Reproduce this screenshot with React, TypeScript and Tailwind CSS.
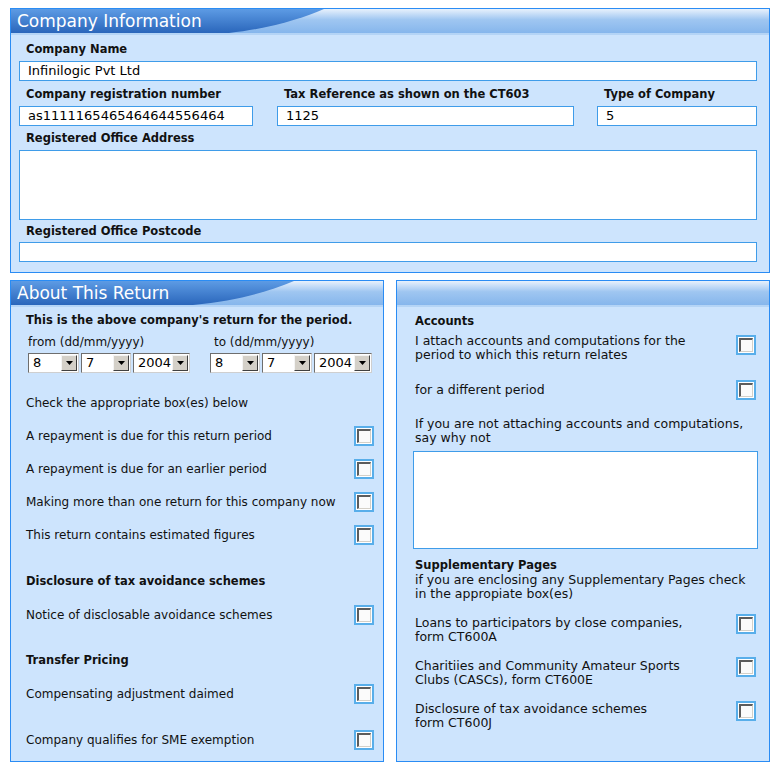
import React, { ReactNode } from 'react';

const font = "font-['DejaVu_Sans','Verdana',sans-serif]";

const PanelHeader: React.FC<{ title?: string; swoosh?: string; gid: string }> = ({ title, swoosh, gid }) => (
  <div className="relative h-[26px] border-b-2 border-[#b4d4f6] bg-gradient-to-b from-[#e8f1fc] via-[#9fc6f1] via-45% to-[#86b6ec] overflow-hidden">
    {swoosh && (
      <svg className="absolute left-0 top-0" width="340" height="24" viewBox="0 0 340 24">
        <defs>
          <linearGradient id={gid} x1="0" y1="0" x2="0" y2="1">
            <stop offset="0" stopColor="#5d9be4" />
            <stop offset="1" stopColor="#2a66bb" />
          </linearGradient>
        </defs>
        <path d={swoosh} fill={`url(#${gid})`} />
      </svg>
    )}
    {title && <div className="relative pl-[6px] text-[17px] leading-[24px] text-white">{title}</div>}
  </div>
);

const Panel: React.FC<{ className: string; children: ReactNode; header: ReactNode }> = ({ className, children, header }) => (
  <div className={`border border-[#2a8cf4] bg-[#cde4fd] ${className}`}>
    {header}
    {children}
  </div>
);

const Label: React.FC<{ children: ReactNode; className?: string }> = ({ children, className = '' }) => (
  <div className={`h-[14px] pl-[7px] text-[11.5px] font-bold leading-[14px] text-[#111] ${className}`}>{children}</div>
);

const TextBox: React.FC<{ value?: string; className?: string }> = ({ value = '', className = '' }) => (
  <div className={`h-[20px] border border-[#3f9ce9] bg-white px-[8px] text-[13px] leading-[18px] text-black ${className}`}>{value}</div>
);

const CheckBox: React.FC<{ className?: string }> = ({ className = '' }) => (
  <div className={`h-[20px] w-[20px] shrink-0 border-2 border-[#58aeea] bg-white p-[1px] ${className}`}>
    <div className="h-full w-full border border-[#d4d0c8] border-t-2 border-l-2 border-t-[#5c5c5c] border-l-[#5c5c5c] bg-[#fbfbfb]" />
  </div>
);

const Select: React.FC<{ value: string; w: string }> = ({ value, w }) => (
  <div className={`flex h-[20px] items-center border border-t-[#6e6e6e] border-l-[#6e6e6e] border-b-[#cfcfcf] border-r-[#cfcfcf] bg-white ${w}`}>
    <span className="flex-1 pl-[4px] text-[13px] leading-[18px] text-black">{value}</span>
    <div className="mr-[1px] flex h-[16px] w-[16px] items-center justify-center border border-t-[#f4f4f4] border-l-[#f4f4f4] border-b-[#404040] border-r-[#404040] bg-[#d4d0c8]">
      <svg width="7" height="4" viewBox="0 0 7 4">
        <path d="M0 0H7L3.5 4Z" fill="#000" />
      </svg>
    </div>
  </div>
);

const CheckRow: React.FC<{ children: ReactNode; className?: string }> = ({ children, className = '' }) => (
  <div className={`flex h-[33px] items-center justify-between ${className}`}>
    <span>{children}</span>
    <CheckBox />
  </div>
);

const RightRow: React.FC<{ children: ReactNode; className?: string; boxTop?: string }> = ({ children, className = '', boxTop = 'mt-[1px]' }) => (
  <div className={`flex items-start justify-between ${className}`}>
    <div className="leading-[14px]">{children}</div>
    <CheckBox className={boxTop} />
  </div>
);

export default function App() {
  return (
    <div className={`h-[762px] w-[779px] overflow-hidden bg-white pl-[10px] pt-[8px] ${font} text-[12px] text-[#111]`}>
      <Panel className="w-[760px] pb-[10px]" header={<PanelHeader gid="g1" title="Company Information" swoosh="M0 0H313C292 9 262 19 218 24H0Z" />}>
        <div className="pl-[8px] pr-[12px]">
          <Label className="mt-[7px]">Company Name</Label>
          <TextBox className="mt-[5px]" value="Infinilogic Pvt Ltd" />
          <div className="mt-[6px] flex">
            <div className="w-[234px]">
              <Label>Company registration number</Label>
              <TextBox className="mt-[5px]" value="as1111165465464644556464" />
            </div>
            <div className="ml-[24px] w-[297px]">
              <Label>Tax Reference as shown on the CT603</Label>
              <TextBox className="mt-[5px]" value="1125" />
            </div>
            <div className="ml-[23px] w-[160px]">
              <Label>Type of Company</Label>
              <TextBox className="mt-[5px]" value="5" />
            </div>
          </div>
          <Label className="mt-[5px]">Registered Office Address</Label>
          <TextBox className="mt-[5px] !h-[70px]" />
          <Label className="mt-[4px]">Registered Office Postcode</Label>
          <TextBox className="mt-[4px]" />
        </div>
      </Panel>

      <div className="mt-[7px] flex gap-[12px]">
        <Panel className="h-[482px] w-[374px]" header={<PanelHeader gid="g2" title="About This Return" swoosh="M0 0H283C256 11 226 20 182 24H0Z" />}>
          <div className="pl-[15px] pr-[9px]">
            <div className="flex h-[28px] items-center text-[11.5px] font-bold">This is the above company's return for the period.</div>
            <div className="flex pl-[2px]">
              <div>
                <div className="h-[14px] leading-[14px]">from (dd/mm/yyyy)</div>
                <div className="mt-[4px] flex gap-[2px]">
                  <Select value="8" w="w-[51px]" />
                  <Select value="7" w="w-[50px]" />
                  <Select value="2004" w="w-[57px]" />
                </div>
              </div>
              <div className="ml-[20px]">
                <div className="h-[14px] pl-[4px] leading-[14px]">to (dd/mm/yyyy)</div>
                <div className="mt-[4px] flex gap-[2px]">
                  <Select value="8" w="w-[50px]" />
                  <Select value="7" w="w-[50px]" />
                  <Select value="2004" w="w-[58px]" />
                </div>
              </div>
            </div>
            <div className="mt-[13px] flex h-[33px] items-center">Check the appropriate box(es) below</div>
            <CheckRow>A repayment is due for this return period</CheckRow>
            <CheckRow>A repayment is due for an earlier period</CheckRow>
            <CheckRow>Making more than one return for this company now</CheckRow>
            <CheckRow>This return contains estimated figures</CheckRow>
            <div className="mt-[14px] flex h-[33px] items-center text-[11.5px] font-bold">Disclosure of tax avoidance schemes</div>
            <CheckRow>Notice of disclosable avoidance schemes</CheckRow>
            <div className="mt-[13px] flex h-[33px] items-center text-[11.5px] font-bold">Transfer Pricing</div>
            <CheckRow>Compensating adjustment daimed</CheckRow>
            <CheckRow className="mt-[13px]">Company qualifies for SME exemption</CheckRow>
          </div>
        </Panel>

        <Panel className="h-[482px] w-[374px]" header={<PanelHeader gid="g3" />}>
          <div className="pl-[18px] pr-[13px] text-[12.5px]">
            <div className="mt-[7px] h-[14px] text-[11.5px] font-bold leading-[14px]">Accounts</div>
            <RightRow className="mt-[6px]">
              I attach accounts and computations for the
              <br />
              period to which this return relates
            </RightRow>
            <div className="mt-[18px] flex h-[20px] items-center justify-between">
              <span>for a different period</span>
              <CheckBox />
            </div>
            <div className="mt-[17px] leading-[14px]">
              If you are not attaching accounts and computations,
              <br />
              say why not
            </div>
            <div className="ml-[-2px] mr-[-2px] mt-[6px] h-[98px] border border-[#3f9ce9] bg-white" />
            <div className="mt-[9px] leading-[14.5px]">
              <div className="text-[11.5px] font-bold">Supplementary Pages</div>
              <div>if you are enclosing any Supplementary Pages check</div>
              <div>in the appropiate box(es)</div>
            </div>
            <RightRow className="mt-[14px]" boxTop="mt-[-2px]">
              Loans to participators by close companies,
              <br />
              form CT600A
            </RightRow>
            <RightRow className="mt-[15px]" boxTop="mt-[-2px]">
              Charitiies and Community Amateur Sports
              <br />
              Clubs (CASCs), form CT600E
            </RightRow>
            <RightRow className="mt-[15px]" boxTop="mt-[-1px]">
              Disclosure of tax avoidance schemes
              <br />
              form CT600J
            </RightRow>
          </div>
        </Panel>
      </div>
    </div>
  );
}
